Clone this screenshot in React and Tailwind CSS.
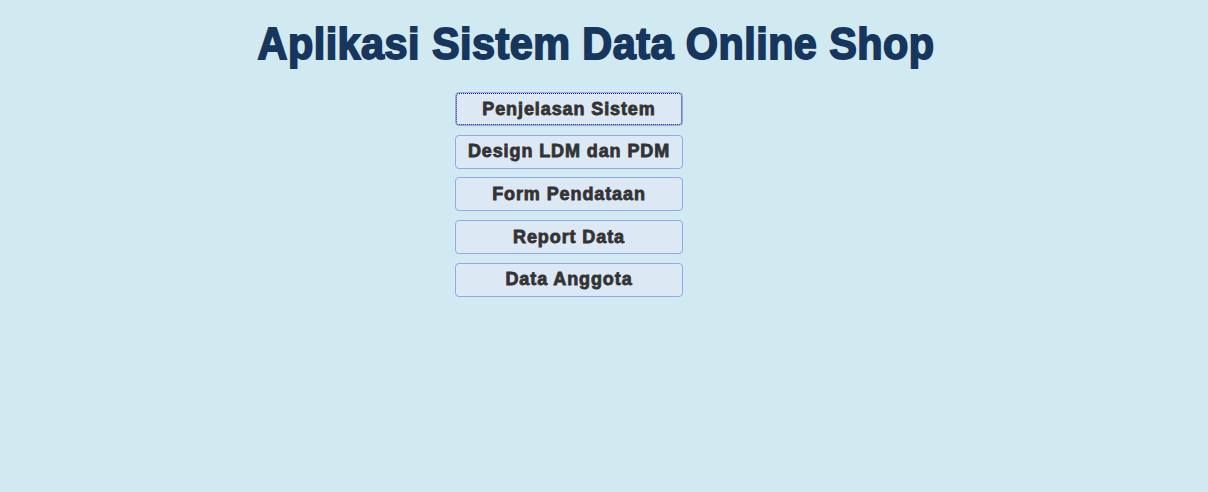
const menu = ['Penjelasan Sistem', 'Design LDM dan PDM', 'Form Pendataan', 'Report Data', 'Data Anggota']

export default function App() {
  return (
    <div className="min-h-screen bg-[#d1e9f0] font-['Liberation_Sans',Arial,sans-serif]">
      <div className="w-[1192px] pt-[18px] text-center">
        <h1 className="inline-block origin-center scale-x-[0.94] text-[44px] leading-[52px] font-black text-[#17365d] [-webkit-text-stroke:1.8px_#17365d] tracking-[0.5px]">
          Aplikasi Sistem Data Online Shop
        </h1>
      </div>
      <div className="ml-[455px] mt-[22px] flex w-[228px] flex-col gap-[8.7px]">
        {menu.map((m, i) => (
          <button
            key={m}
            className={`h-[34px] w-[228px] rounded-[4px] border border-[#8faae6] bg-[#dde8f5] text-[18px] font-bold tracking-[0.9px] text-[#333333] [-webkit-text-stroke:0.8px_#333333] ${i === 0 ? 'outline outline-1 outline-dotted outline-[#1a1a6e] -outline-offset-2' : ''}`}
          >
            {m}
          </button>
        ))}
      </div>
    </div>
  )
}
